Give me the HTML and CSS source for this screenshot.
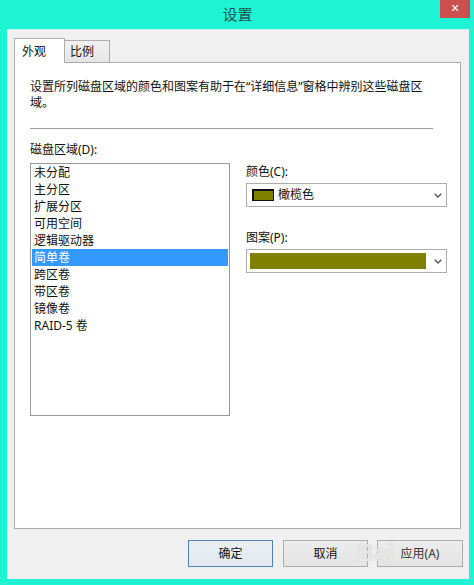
FILE: index.html
```html
<!DOCTYPE html>
<html lang="zh-CN">
<head>
<meta charset="utf-8">
<title>设置</title>
<link rel="stylesheet" href="styles.css">
</head>
<body>
<div class="window">
  <div class="titlebar">
    <span></span>
    <div class="title">设置</div>
    <div class="close">✕</div>
  </div>
  <div class="client">
    <div class="tabs">
      <div class="tab active">外观</div>
      <div class="tab">比例</div>
    </div>
    <div class="panel">
      <p class="desc">设置所列磁盘区域的颜色和图案有助于在“详细信息”窗格中辨别这些磁盘区域。</p>
      <div class="sep"></div>
      <div class="regions">
        <div class="label">磁盘区域(D):</div>
        <ul class="list">
          <li>未分配</li>
          <li>主分区</li>
          <li>扩展分区</li>
          <li>可用空间</li>
          <li>逻辑驱动器</li>
          <li class="selected">简单卷</li>
          <li>跨区卷</li>
          <li>带区卷</li>
          <li>镜像卷</li>
          <li>RAID-5 卷</li>
        </ul>
        <div class="right">
          <div class="label">颜色(C):</div>
          <div class="combo">
            <span class="swatch"></span>
            <span class="combo-text">橄榄色</span>
            <svg class="chev" width="8" height="5" viewBox="0 0 8 5"><path d="M0.7 0.7 L4 4 L7.3 0.7" fill="none" stroke="#555" stroke-width="1.3"/></svg>
          </div>
          <div class="label second">图案(P):</div>
          <div class="combo">
            <span class="pattern"></span>
            <svg class="chev" width="8" height="5" viewBox="0 0 8 5"><path d="M0.7 0.7 L4 4 L7.3 0.7" fill="none" stroke="#555" stroke-width="1.3"/></svg>
          </div>
        </div>
      </div>
    </div>
    <div class="buttons">
      <div class="btn default">确定</div>
      <div class="btn">取消</div>
      <div class="btn apply">应用(A)</div>
    </div>
  </div>
  <div class="watermark">Bai</div>
</div>
</body>
</html>
```

FILE: styles.css
```css
* { box-sizing: border-box; }
html, body { margin: 0; padding: 0; }
body {
  background: #1ef4d3;
  font-family: "Noto Sans", "Noto Sans CJK SC", sans-serif;
  font-size: 12px;
  color: #111;
}
.window {
  position: relative;
  width: 474px;
  height: 585px;
  background: #1ef4d3;
}
.titlebar {
  height: 29px;
  display: grid;
  grid-template-columns: 1fr auto 1fr;
}
.title {
  font-size: 15px;
  line-height: 28px;
  color: #1f5a52;
  padding-left: 1px;
}
.close {
  justify-self: end;
  margin-right: 4px;
  width: 30px;
  height: 18px;
  background: #c9504f;
  color: #fff;
  font-size: 11px;
  font-weight: bold;
  line-height: 18px;
  text-align: center;
  font-family: "DejaVu Sans", sans-serif;
}
.client {
  margin-left: 7px;
  width: 462px;
  height: 550px;
  background: #f0f0f0;
  padding: 9px 6px 12px 7px;
  display: flex;
  flex-direction: column;
  border-top: 1px solid #c9f3ec;
}
.tabs {
  height: 23px;
  display: flex;
  align-items: flex-end;
}
.tab {
  line-height: 16px;
}
.tab.active {
  position: relative;
  z-index: 1;
  width: 51px;
  height: 25px;
  margin-bottom: -1px;
  background: #fff;
  border: 1px solid #adadad;
  border-bottom: none;
  padding: 5px 0 0 7px;
}
.tab:not(.active) {
  width: 45px;
  height: 22px;
  background: linear-gradient(#f2f2f2, #e5e5e5);
  border: 1px solid #adadad;
  border-left: none;
  border-bottom: none;
  padding: 3px 0 0 5px;
}
.panel {
  flex: 1;
  margin-right: 2px;
  background: #fff;
  border: 1px solid #adadad;
  padding: 16px 0 0 15px;
}
.desc {
  margin: 0;
  width: 400px;
  line-height: 16px;
}
.sep {
  width: 403px;
  height: 1px;
  margin-top: 17px;
  background: #a0a0a0;
}
.regions {
  margin-top: 13px;
  display: grid;
  grid-template-columns: 200px 201px;
  column-gap: 16px;
}
.regions > .label {
  grid-column: 1 / 3;
  margin-bottom: 5px;
}
.label {
  line-height: 16px;
}
.list {
  margin: 0;
  list-style: none;
  height: 253px;
  border: 1px solid #9a9a9a;
  padding: 0 1px;
}
.list li {
  height: 17px;
  line-height: 17px;
  padding-left: 2px;
}
.list li.selected {
  background: #3399ff;
  color: #fff;
}
.right {
  padding-top: 1px;
  display: flex;
  flex-direction: column;
}
.combo {
  margin-top: 3px;
  height: 24px;
  border: 1px solid #acacac;
  background: #fff;
  display: flex;
  align-items: center;
}
.label.second {
  margin-top: 23px;
}
.swatch {
  width: 22px;
  height: 12px;
  margin-left: 5px;
  background: #808000;
  border: 1px solid #111;
  border-width: 2px 1px 1px 2px;
}
.combo-text {
  margin-left: 4px;
  line-height: 16px;
}
.pattern {
  width: 176px;
  height: 16px;
  margin-left: 3px;
  background: #808000;
}
.chev {
  margin-left: auto;
  margin-right: 4px;
}
.buttons {
  margin-top: 11px;
  display: flex;
  justify-content: flex-end;
}
.btn {
  width: 85px;
  height: 27px;
  border: 1px solid #acacac;
  background: linear-gradient(#ececec, #e4e4e4);
  text-align: center;
  line-height: 25px;
  margin-left: 10px;
}
.btn.default {
  border-color: #4a86bd;
  background: linear-gradient(#eaf0f6, #e2e8ee);
}
.btn.apply {
  width: 86px;
  margin-left: 9px;
  color: #333;
}
.watermark {
  position: absolute;
  left: 357px;
  top: 538px;
  font-family: "Liberation Sans", sans-serif;
  font-size: 24px;
  font-weight: bold;
  line-height: 30px;
  color: rgba(236, 236, 236, 0.85);
  text-shadow: 0 0 1px #c8c8c8;
  pointer-events: none;
}
```
